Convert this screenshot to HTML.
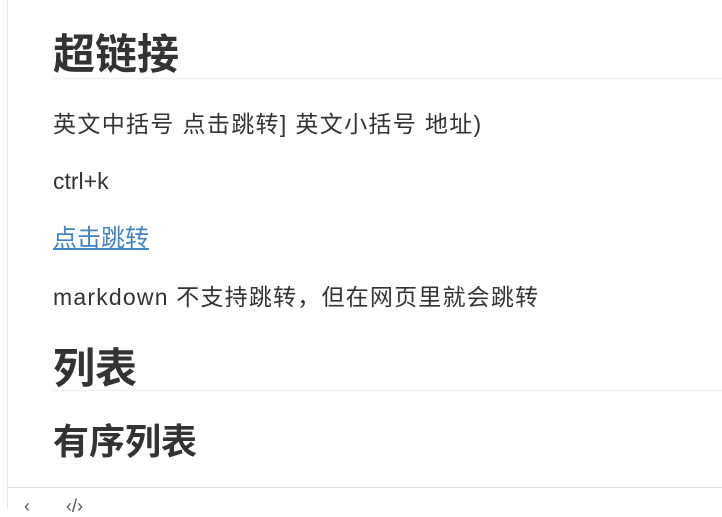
<!DOCTYPE html>
<html><head><meta charset="utf-8"><style>
body{margin:0;width:722px;height:508px;overflow:hidden;background:#fff;font-family:"Liberation Sans","Noto Sans CJK SC",sans-serif;color:#333;position:relative}
.lb{position:absolute;left:7px;top:0;width:1px;height:508px;background:#e6e6e6}
.t{position:absolute;left:53px;white-space:nowrap}
.h1{font-size:42px;font-weight:bold;line-height:50px}
.hr{position:absolute;left:53px;right:0;height:1px;background:#eee}
.p{font-size:23px;line-height:30px}
a{color:#4183c4;text-decoration:underline}
.sb{position:absolute;left:8px;right:0;top:487px;height:1px;background:#ddd}
</style></head><body>
<div class="lb"></div>
<div class="t h1" style="top:30px">超链接</div>
<div class="hr" style="top:78px"></div>
<div class="t p" style="top:109px;letter-spacing:1.35px">英文中括号 点击跳转] 英文小括号 地址)</div>
<div class="t p" style="top:166px">ctrl+k</div>
<div class="t p" style="top:224px;font-size:24px"><a>点击跳转</a></div>
<div class="t p" style="top:282px;letter-spacing:1.2px">markdown 不支持跳转，但在网页里就会跳转</div>
<div class="t h1" style="top:344px">列表</div>
<div class="hr" style="top:390px"></div>
<div class="t" style="top:420px;font-size:36px;font-weight:bold;line-height:44px">有序列表</div>
<div class="sb"></div>
<div style="position:absolute;left:24px;top:496px;font-size:18px;color:#555">‹</div>
<div style="position:absolute;left:66px;top:496px;font-size:18px;color:#555">‹/›</div>
</body></html>
